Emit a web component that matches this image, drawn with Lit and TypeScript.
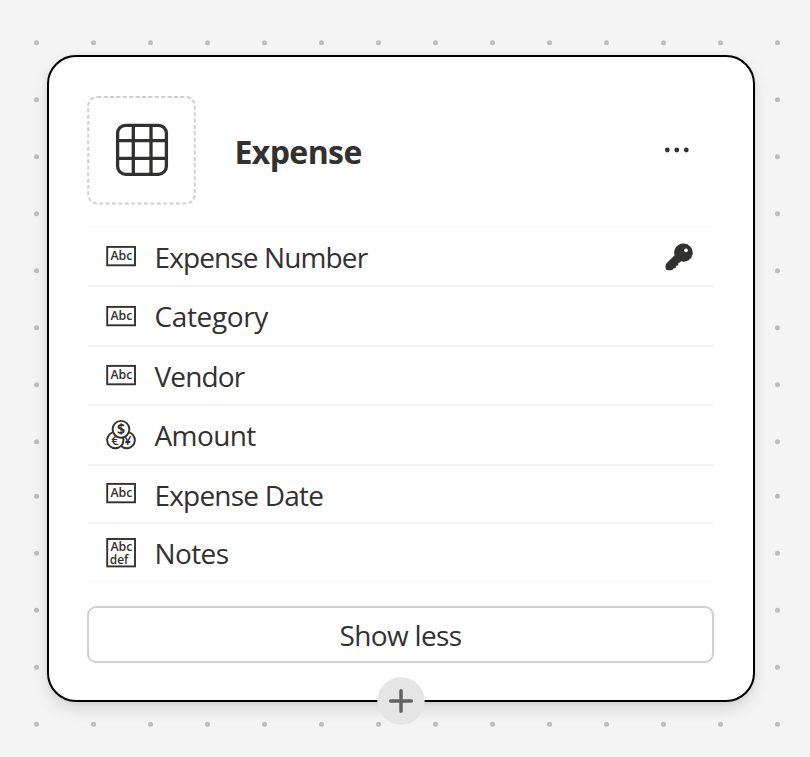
import { LitElement, html, css, svg } from "lit";
import { customElement, property } from "lit/decorators.js";

type Kind = "text" | "currency" | "memo";

interface Field {
  label: string;
  kind: Kind;
  height: number;
  spacing: number;
  iconTop: number;
  labelTop: number;
  key?: boolean;
}

const FIELDS: Field[] = [
  { label: "Expense Number", kind: "text", height: 59, spacing: -0.88, iconTop: 13, labelTop: 10, key: true },
  { label: "Category", kind: "text", height: 60, spacing: -0.38, iconTop: 14, labelTop: 10 },
  { label: "Vendor", kind: "text", height: 59, spacing: -0.85, iconTop: 13, labelTop: 10 },
  { label: "Amount", kind: "currency", height: 60, spacing: -0.6, iconTop: 14, labelTop: 10 },
  { label: "Expense Date", kind: "text", height: 58, spacing: -0.8, iconTop: 12, labelTop: 10 },
  { label: "Notes", kind: "memo", height: 57, spacing: -0.6, iconTop: 14, labelTop: 10 },
];

@customElement("field-icon")
export class FieldIcon extends LitElement {
  @property() kind: Kind = "text";

  static styles = css`
    :host { display: block; width: 30px; height: 30px; }
    svg { display: block; overflow: visible; }
    text { font-family: "Open Sans", "Noto Sans", sans-serif; fill: #323130; }
    .abc { font-size: 12px; font-weight: 600; }
    .coin { font-size: 13px; font-weight: 600; text-anchor: middle; }
    .dollar { font-size: 14px; font-weight: 700; text-anchor: middle; }
    .frame { fill: none; stroke: #323130; stroke-width: 1.9; }
    .disc { fill: #fff; stroke: #323130; stroke-width: 1.9; }
  `;

  render() {
    const body =
      this.kind === "text"
        ? svg`<rect class="frame" x="1.2" y="5.9" width="27.8" height="18.4"/>
            <text class="abc" x="4.4" y="19" textLength="22" lengthAdjust="spacingAndGlyphs">Abc</text>`
        : this.kind === "memo"
        ? svg`<rect class="frame" x="1.2" y="1" width="27.8" height="27.4"/>
            <text class="abc" x="4.4" y="13" textLength="22" lengthAdjust="spacingAndGlyphs">Abc</text>
            <text class="abc" x="3.8" y="25.6" textLength="18.5" lengthAdjust="spacingAndGlyphs">def</text>`
        : svg`<circle class="disc" cx="20.7" cy="20.1" r="8.2"/>
            <text class="coin" x="21.6" y="24.9">¥</text>
            <circle class="disc" cx="9.3" cy="20.1" r="8.2"/>
            <text class="coin" x="9" y="24.9">€</text>
            <circle class="disc" cx="15" cy="9.3" r="8.4"/>
            <text class="dollar" x="15" y="14.3">$</text>`;
    return html`<svg width="30" height="30" viewBox="0 0 30 30">${body}</svg>`;
  }
}

@customElement("app-root")
export class AppRoot extends LitElement {
  static styles = css`
    :host {
      display: block;
      box-sizing: border-box;
      position: relative;
      width: 810px;
      height: 757px;
      padding: 55px 0 0 47px;
      overflow: hidden;
      background: #f4f4f4;
      color: #323130;
      font-family: "Open Sans", "Noto Sans", sans-serif;
    }
    .dots { position: absolute; inset: 0; fill: #bdbdbd; }
    .card {
      position: relative;
      box-sizing: border-box;
      width: 708px;
      height: 647px;
      padding: 39px 39px 0 38px;
      border: 2px solid #000;
      border-radius: 29px;
      background: #fff;
      box-shadow: 0 7px 16px rgba(0, 0, 0, 0.12), 0 1px 4px rgba(0, 0, 0, 0.06);
    }
    .head { display: flex; align-items: center; height: 109px; }
    .tile { display: block; flex: none; }
    .title {
      flex: 1;
      margin: 2px 0 0 38.5px;
      font-size: 32px;
      line-height: 42px;
      font-weight: 700;
      letter-spacing: -0.6px;
    }
    .more { display: block; margin: -1px 24px 0 0; }
    .list {
      margin-top: 22px;
      border: 1px solid #fbfbfb;
      border-bottom-color: #fafafa;
    }
    .row {
      box-sizing: border-box;
      display: flex;
      align-items: flex-start;
      padding: 0 20px 0 18px;
      border-bottom: 2px solid #f2f2f2;
    }
    .row:last-child { border-bottom: 0; }
    .label {
      flex: 1;
      margin-left: 18.5px;
      font-size: 28px;
      line-height: 38px;
    }
    .key { display: block; margin-top: 15px; }
    .toggle {
      box-sizing: border-box;
      display: block;
      width: 627px;
      height: 57px;
      margin-top: 24px;
      padding: 0;
      border: 2px solid #d2d0ce;
      border-radius: 9px;
      background: #fff;
      color: inherit;
      font: 28px/38px "Open Sans", "Noto Sans", sans-serif;
      letter-spacing: -0.65px;
    }
    .add { position: absolute; left: 328px; bottom: -25px; display: block; }
  `;

  private dots() {
    const out = [];
    for (let r = 0; r < 13; r++) {
      for (let c = 0; c < 14; c++) {
        const y = r < 8 ? 42.8 + r * 57 : 724.2 - (12 - r) * 57;
        out.push(svg`<circle cx=${36.5 + c * 57} cy=${y} r="2.5"/>`);
      }
    }
    return out;
  }

  render() {
    return html`
      <svg class="dots" width="810" height="757">${this.dots()}</svg>
      <section class="card">
        <header class="head">
          <svg class="tile" width="109" height="109" viewBox="0 0 109 109" fill="none">
            <rect x="1.2" y="1" width="106.6" height="106.6" rx="9" stroke="#d0d0d0" stroke-width="2" stroke-dasharray="4 2.4"/>
            <g stroke="#323130" stroke-width="3.3">
              <rect x="30.6" y="29.3" width="48.8" height="49" rx="8"/>
              <path d="M46.3 30v48M64 30v48M31 44.7h48M31 62.4h48"/>
            </g>
          </svg>
          <h1 class="title">Expense</h1>
          <svg class="more" width="26" height="6" viewBox="0 0 26 6" fill="#323130">
            <circle cx="3.3" cy="3" r="2.4"/><circle cx="12.8" cy="3" r="2.4"/><circle cx="22.3" cy="3" r="2.4"/>
          </svg>
        </header>
        <div class="list">
          ${FIELDS.map(
            (f) => html`<div class="row" style="height:${f.height}px">
              <field-icon .kind=${f.kind} style="margin-top:${f.iconTop}px"></field-icon>
              <span class="label" style="margin-top:${f.labelTop}px;letter-spacing:${f.spacing}px">${f.label}</span>
              ${f.key
                ? html`<svg class="key" width="28" height="28" viewBox="0 0 28 28">
                    <path fill="#323130" fill-rule="evenodd" d="M18.3.5a9.1 9.1 0 0 0-8.7 11.8L1.4 20.5Q.6 21.3.6 22.5V25q0 2.3 2.3 2.3H6q1.3 0 1.9-.8l.7-1.3h1.2q1.2 0 1.2-1.2v-1.2h1q1.2 0 1.2-1.2v-1.1l1-1.1h.8l1-1.1a9.1 9.1 0 1 0 2.3-17.8ZM21 5.4a1.9 1.9 0 1 1 0 3.8 1.9 1.9 0 0 1 0-3.8Z"/>
                  </svg>`
                : null}
            </div>`
          )}
        </div>
        <button class="toggle">Show less</button>
        <svg class="add" width="48" height="48" viewBox="0 0 48 48">
          <circle cx="24" cy="24" r="23.7" fill="#e5e5e5"/>
          <path d="M24 13.7v20.6M13.7 24h20.6" stroke="#616161" stroke-width="3.5" stroke-linecap="round"/>
        </svg>
      </section>
    `;
  }
}
